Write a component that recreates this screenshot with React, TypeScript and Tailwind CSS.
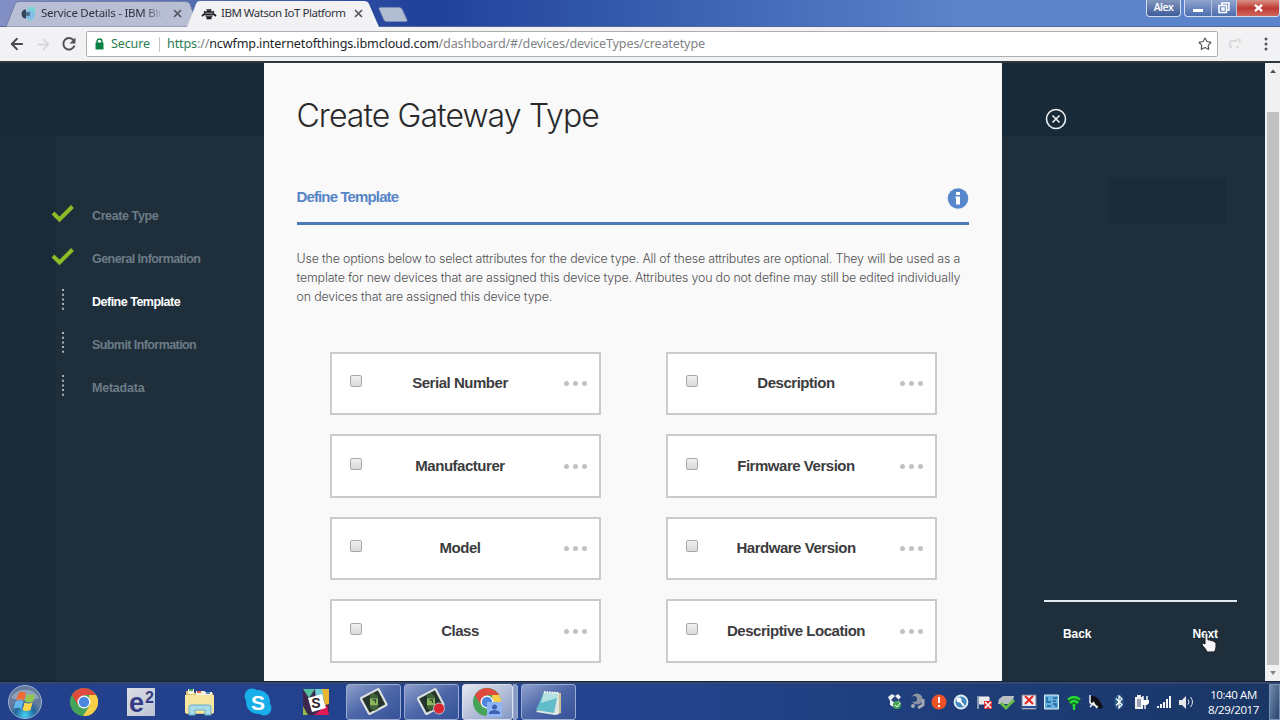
import React from 'react';
import { ArrowLeft, ArrowRight, RotateCw, Star } from 'lucide-react';

const STEPS = [
  { label: 'Create Type', state: 'done', tracking: 'tracking-[-0.4px]' },
  { label: 'General Information', state: 'done', tracking: 'tracking-[-0.55px]' },
  { label: 'Define Template', state: 'current', tracking: 'tracking-[-0.5px]' },
  { label: 'Submit Information', state: 'todo', tracking: 'tracking-[-0.58px]' },
  { label: 'Metadata', state: 'todo', tracking: 'tracking-[-0.22px]' },
];

const ATTRIBUTES = [
  'Serial Number',
  'Description',
  'Manufacturer',
  'Firmware Version',
  'Model',
  'Hardware Version',
  'Class',
  'Descriptive Location',
];

const TAB_FONT = "font-['Noto_Sans','Open_Sans',sans-serif]";

const CloseGlyph: React.FC = () => (
  <svg width="9" height="9" viewBox="0 0 9 9" className="shrink-0" stroke="#55585f" strokeWidth="1.7">
    <path d="M1 1l7 7M8 1l-7 7" />
  </svg>
);

const TabStrip: React.FC = () => (
  <div className="relative h-[27px] border-b border-[#4c6699] bg-linear-to-r from-[#8390c5] from-0% via-[#20409a] via-33% to-[#5b84ca] to-75%">
    <svg className="absolute top-0 left-0" width="420" height="27" viewBox="0 0 420 27">
      <path d="M6 27L15 4Q16 1.500 19 1.500H185Q189 1.500 190 4L198 27Z" fill="#b8bfd5" stroke="#7480a5" />
      <path d="M187 27L196 4Q197 1 200 1H364Q368 1 369 4L379 27Z" fill="#f2f2f4" />
      <path d="M379 8.500Q379 7.500 381 7.500H399Q401 7.500 402 9L407 20Q407.500 21.500 405.500 21.500H387Q385 21.500 384 20Z" fill="#b1bed1" stroke="#8190ba" strokeWidth=".7" />
      <path d="M28 7h7v7q0 7-7 7" fill="#78d4d4" />
      <circle cx="30" cy="15" r="4.500" fill="#83bce9" />
      <path d="M26 9.500a4.500 4.500 0 000 9z" fill="#30445a" />
      <circle cx="28" cy="14" r="2.300" fill="#4a7288" />
      <g stroke="#17191c" strokeWidth="1.700" fill="none">
        <path d="M202 16l3-2.500M216 16l-3-2.500M204 11.500l3 1.500M214 11.500l-3 1.500M206.500 10h5M206.500 18.500h5" />
        <ellipse cx="209" cy="14.500" rx="3" ry="2.800" fill="#222" />
      </g>
      <path d="M205.500 13.200h7M205.500 15.800h7" stroke="#eee" strokeWidth=".7" />
    </svg>
    <div className={`absolute inset-0 flex items-center text-[11.5px] text-[#30333c] ${TAB_FONT}`}>
      <span className="ml-[41px] w-[122px] whitespace-nowrap tracking-[-0.25px] mask-r-from-85%">
        Service Details - IBM Blu
      </span>
      <span className="ml-[10px]"><CloseGlyph /></span>
      <span className="ml-[39px] w-[126px] whitespace-nowrap tracking-[-0.48px]">IBM Watson IoT Platform</span>
      <span className="ml-[7px]"><CloseGlyph /></span>
    </div>
    <div className="absolute top-0 right-0 flex h-[17px] items-start text-white">
      <div className="mr-[3px] flex h-[17px] w-[35px] items-center justify-center rounded-b border border-t-0 border-[#d4def1] bg-linear-to-b from-[#8296bd] to-[#3e5c9b] font-['Open_Sans',sans-serif] text-[10.5px] font-semibold tracking-[-0.5px]">
        Alex
      </div>
      <div className="flex h-[17px] w-[96px] overflow-hidden rounded-b border border-t-0 border-[#d4def1] bg-linear-to-b from-[#91a5ce] via-[#6e88bd] to-[#4d6fae]">
        <div className="flex w-[27px] items-end justify-center border-r border-[#b6c5df] pb-[4px]">
          <div className="h-[3px] w-[10px] bg-white" />
        </div>
        <div className="flex w-[25px] items-center justify-center border-r border-[#b6c5df]">
          <svg width="12" height="12" viewBox="0 0 12 12" fill="none" stroke="#fff" strokeWidth="1.500">
            <path d="M4 3V1h7v7H9M1 3.500h7.500v7H1zM4 6h2v2H4z" />
          </svg>
        </div>
        <div className="flex flex-1 items-center justify-center bg-linear-to-b from-[#d79085] via-[#bd3832] to-[#ce665c]">
          <svg width="9" height="8" viewBox="0 0 10 9" stroke="#fff" strokeWidth="2.600"><path d="M1 1l8 7M9 1L1 8" /></svg>
        </div>
      </div>
    </div>
  </div>
);

const AddressBar: React.FC = () => (
  <div className="flex h-[36px] items-center border-b-2 border-[#30383e] bg-[#f2f1f3]">
    <ArrowLeft size={18} strokeWidth={2.4} className="ml-[8px] text-[#494b50]" />
    <ArrowRight size={17} className="ml-[9px] text-[#d2d2d5]" />
    {/* reload */}
    <svg width="16" height="16" viewBox="0 0 16 16" className="ml-[9px]" fill="none" stroke="#505257" strokeWidth="2">
      <path d="M12.500 4.200A5.700 5.700 0 1013.500 9.500" />
      <path d="M14.500 1.500v6h-6z" fill="#505257" stroke="none" />
    </svg>
    <div className={`ml-[9px] flex h-[26px] w-[1132px] items-center rounded-[2px] border border-[#afafb2] bg-white text-[13px] ${TAB_FONT}`}>
      <svg width="9" height="12" viewBox="0 0 9 12" className="ml-[8px]">
        <path d="M2 5V3.500a2.500 2.500 0 015 0V5" fill="none" stroke="#0b8043" strokeWidth="1.400" />
        <rect x=".5" y="4.500" width="8" height="7" rx=".5" fill="#0b8043" />
      </svg>
      <span className="ml-[7px] w-[41px] text-[12.5px] tracking-[-0.1px] text-[#277d51]">Secure</span>
      <span className="mx-[7px] h-[15px] w-px bg-[#c5c5c5]" />
      <span className="flex-1 text-[12.6px] tracking-[-0.15px] whitespace-nowrap text-[#808386]">
        <span className="text-[#277d51]">https</span>://<span className="text-[#22252a]">ncwfmp.internetofthings.ibmcloud.com</span>/dashboard/#/devices/deviceTypes/createtype
      </span>
      <Star size={14} strokeWidth={2} className="mr-[5px] text-[#55585d]" />
    </div>
    <svg width="14" height="12" viewBox="0 0 14 12" className="ml-[10px]" fill="none" stroke="#dcdadc" strokeWidth="2">
      <path d="M2 8V5q0-2 2-2h5M1 9h3M8 9h3" />
      <path d="M8 0l5 1-1 5z" fill="#dcdadc" stroke="none" />
    </svg>
    <svg width="4" height="14" viewBox="0 0 4 14" className="ml-[22px]" fill="#55575b">
      <circle cx="2" cy="2" r="1.500" /><circle cx="2" cy="7" r="1.500" /><circle cx="2" cy="12" r="1.500" />
    </svg>
  </div>
);

const StepMarker: React.FC<{ state: string }> = ({ state }) =>
  state === 'done' ? (
    <svg width="24" height="20" viewBox="0 0 24 20" className="mb-[5px]" fill="none" stroke="#8cbc26" strokeWidth="4">
      <path d="M2 9L8.500 15.500 21.500 2.500" />
    </svg>
  ) : (
    <svg width="24" height="22" viewBox="0 0 24 22" className="mb-[5px]" stroke="#a8b2ba" strokeWidth="2">
      <path d="M12 0v22" strokeDasharray="2 2.700" />
    </svg>
  );

const Sidebar: React.FC = () => (
  <aside className="relative w-[264px] shrink-0 bg-[#1e2e3a]">
    {/* dimmed dashboard behind the wizard */}
    <div className="absolute inset-x-0 top-0 h-[73px] bg-[#182a37]" />
    <div className="absolute top-[73px] bottom-0 left-0 w-[56px] bg-[#192b38]" />
    <ol className="relative pt-[132px]">
      {STEPS.map((step) => (
        <li key={step.label} className="flex h-[43px] items-center">
          <span className="ml-[51px] flex h-[28px] w-[41px] items-center"><StepMarker state={step.state} /></span>
          <span
            className={`text-[12.5px] font-bold whitespace-nowrap ${step.tracking} ${step.state === 'current' ? 'text-white' : 'text-[#6d7c86]'}`}
          >
            {step.label}
          </span>
        </li>
      ))}
    </ol>
  </aside>
);

const AttributeCard: React.FC<{ label: string }> = ({ label }) => (
  <label className="flex h-[63.5px] items-center border-2 border-[#cbcbcb] bg-white">
    <span className="mb-[4px] ml-[18px] size-[12px] rounded-[2px] border border-[#a9a9a9] bg-linear-to-b from-[#f0f0f0] to-[#dadada]" />
    <span className="w-[197px] text-center text-[15px] font-bold tracking-[-0.47px] text-[#3c3c3e]">{label}</span>
    <span className="mt-[1px] ml-[5px] flex gap-[4px]">
      <i className="size-[5px] rounded-full bg-[#c2c2c2]" />
      <i className="size-[5px] rounded-full bg-[#c2c2c2]" />
      <i className="size-[5px] rounded-full bg-[#c2c2c2]" />
    </span>
  </label>
);

const Wizard: React.FC = () => (
  <main className="w-[738px] shrink-0 bg-[#f9f9f9] pr-[33px] pl-[32.5px]">
    <h1 className="pt-[32px] font-['Inter',sans-serif] text-[32px] leading-[42px] font-light tracking-[-0.93px] whitespace-nowrap text-[#29292b]">
      Create Gateway Type
    </h1>
    <div className="mt-[44px] flex h-[44px] items-start justify-between border-b-3 border-[#4b7bb4]">
      <h2 className="pt-[6px] text-[15px] leading-[20px] font-bold tracking-[-0.87px] text-[#5685c6]">Define Template</h2>
      <svg width="22" height="22" viewBox="0 0 22 22" className="mt-[7px]">
        <circle cx="11" cy="10.500" r="10.300" fill="#5687cb" />
        <path d="M9 4h4v3H9zM8.500 8.500H13v8H9v-6h-.5z" fill="#fff" />
      </svg>
    </div>
    <p className="mt-[24px] font-['Inter',sans-serif] text-[12.4px] leading-[19px] font-light tracking-[-0.16px] whitespace-nowrap text-[#505053]">
      Use the options below to select attributes for the device type. All of these attributes are optional. They will be used as a<br />
      template for new devices that are assigned this device type. Attributes you do not define may still be edited individually<br />
      on devices that are assigned this device type.
    </p>
    <div className="mt-[45.5px] grid grid-cols-[271px_271px] gap-x-[65px] gap-y-[19px] pl-[33px]">
      {ATTRIBUTES.map((label) => (
        <AttributeCard key={label} label={label} />
      ))}
    </div>
  </main>
);

const HandCursor: React.FC = () => (
  <svg width="16" height="21" viewBox="0 0 16 21" className="absolute top-[569px] left-[199px]" fill="#f7f7fa" stroke="#15191e">
    <path d="M4 12V2.500Q4 1 5.500 1T7 2.500V8q2-.8 3 .7 2-.7 3 1 2 0 2 2V15q0 3-2 5H6Q5 17 1 13q0-3 3-1z" />
  </svg>
);

const ActionRail: React.FC = () => (
  <aside className="relative flex w-[263px] shrink-0 flex-col bg-[#1e2e3b]">
    <div className="absolute inset-x-0 top-0 h-[73px] bg-[#182a37]" />
    <div className="absolute top-[114px] left-[106px] h-[47px] w-[118px] bg-[#1a2b38]" />
    <button className="relative mt-[45px] ml-[42.5px] size-[22px]">
      <svg width="22" height="22" viewBox="0 0 22 22" fill="none" stroke="#eaf0f4" strokeWidth="1.600">
        <circle cx="11" cy="11" r="9.500" />
        <path d="M7.500 7.500l7 7m0-7l-7 7" />
      </svg>
    </button>
    <div className="mt-auto mr-[28px] mb-[38px] ml-[42px] flex justify-between border-t-2 border-[#e1e9f0] px-[19px] pt-[23px] text-[12px] leading-[18px] font-bold tracking-[-0.1px] text-white">
      <button>Back</button>
      <button>Next</button>
    </div>
    <HandCursor />
  </aside>
);

const Scrollbar: React.FC = () => (
  <div className="flex flex-1 flex-col items-center bg-[#f1f1f2]">
    <svg width="8" height="49" viewBox="0 0 8 49"><path d="M1 10l3-3.500L7 10z" fill="#505050" /></svg>
    <div className="w-[12px] flex-1 bg-[#c1c1c2]" />
    <svg width="8" height="16" viewBox="0 0 8 16"><path d="M1 6h6L4 10z" fill="#838383" /></svg>
  </div>
);

const ChromeLogo: React.FC = () => (
  <>
    <circle cx="14" cy="14" r="14" fill="#46a45a" />
    <path d="M1.900 7A14 14 0 0126.100 7H14l-6 10z" fill="#df493e" />
    <path d="M26.100 7A14 14 0 0113 28l7-11-1-10z" fill="#f7cf48" />
    <circle cx="14" cy="14" r="6.500" fill="#fff" />
    <circle cx="14" cy="14" r="5.200" fill="#4d86df" />
  </>
);

const CamtasiaLogo: React.FC = () => (
  <g transform="rotate(-28 14 14)">
    <rect x="4" y="4.500" width="20" height="18" rx="1" fill="#26352c" stroke="#dce1df" strokeWidth="2.200" />
    <g transform="rotate(28 14 14)">
      <path d="M10 6l4-1 4 3v3h-8zM10 18h8v3l-4 2-4-3z" fill="#3f6139" />
      <path d="M10 10.500h8v7h-8z" fill="#8ab85c" />
      <path d="M12.500 12h3v3" fill="none" stroke="#344b35" strokeWidth="1.300" />
    </g>
  </g>
);

const WINDOW_BUTTON = 'flex h-[36px] w-[55px] items-center justify-center rounded-[3px] border border-[#9aabd1] bg-linear-to-br from-[#8fa0cb] via-[#4c66a8] to-[#365399]';

const Launchers: React.FC = () => (
  <div className="flex items-center">
    <svg width="36" height="36" viewBox="0 0 36 36" className="ml-[7px]">
      <defs>
        <radialGradient id="orb" cy=".9"><stop stopColor="#45d4f4" /><stop offset=".6" stopColor="#24679f" /><stop offset="1" stopColor="#657b9d" /></radialGradient>
      </defs>
      <circle cx="18" cy="18" r="16.500" fill="url(#orb)" stroke="#9cb1cd" />
      <path d="M4 14a15 13 0 0128 0q-14 5-28 0" fill="#c6d4e3" opacity=".45" />
      <path d="M11.500 9q4-2.500 7.500 0l-2 7.500q-4-2.500-8 0z" fill="#ed6b35" />
      <path d="M20 10q4 2 8 0l-2 7.500q-4 2-8 0z" fill="#91c84d" />
      <path d="M8.500 17.500q4-2.500 8 0l-2 7.500q-4-2.500-8 0z" fill="#62b6ed" />
      <path d="M17.500 18.500q4 2 8 0l-2 7.500q-4 2-8 0z" fill="#ffd74f" />
    </svg>
    <svg width="28" height="28" viewBox="0 0 28 28" className="ml-[27px]"><ChromeLogo /></svg>
    <div className="relative ml-[29px] h-[28px] w-[28px] bg-linear-to-br from-[#dcdfe6] to-[#bcc3d3] font-['Liberation_Sans',sans-serif] font-bold text-[#363b85]">
      <span className="absolute top-[2px] left-[2px] text-[27px] leading-[27px]">e</span>
      <span className="absolute top-[1px] right-[1px] text-[16px] leading-[17px]">2</span>
    </div>
    <svg width="32" height="28" viewBox="0 0 32 28" className="ml-[29px]">
      <path d="M2 3h7l2 2h18v21H2z" fill="#d9bf70" />
      <path d="M4 1h6v5H4zM12 3h9v4h-9zM21 4h7v4h-7z" fill="#f3f2df" />
      <path d="M5 1h4v2H5z" fill="#43a557" /><path d="M13 3h4v2h-4z" fill="#d96242" /><path d="M22 4h4v2h-4z" fill="#518ac6" />
      <path d="M1 7h29v18H1z" fill="#f6e6a2" />
      <path d="M5 27V19q0-2 2-2h18q2 0 2 2v8h-6v-5h-10v5z" fill="#a9dae7" stroke="#6bacc8" />
    </svg>
    <svg width="28" height="28" viewBox="0 0 28 28" className="ml-[28px] font-['Liberation_Sans',sans-serif] font-bold">
      <circle cx="14" cy="14" r="12" fill="#18aee9" /><circle cx="8" cy="8" r="7.500" fill="#18aee9" /><circle cx="20" cy="20" r="7.500" fill="#18aee9" />
      <text x="14" y="21.500" textAnchor="middle" fontSize="21" fill="#fff">S</text>
    </svg>
    <svg width="28" height="28" viewBox="0 0 28 28" className="ml-[30px] font-['Liberation_Sans',sans-serif] font-bold">
      <path d="M1 1h26v26H1z" fill="#3c284c" />
      <path d="M1 1h12L7 10z" fill="#54bda2" /><path d="M13 1h14v8L14 13z" fill="#70cbd2" /><path d="M20 1h7v15l-4 1z" fill="#e9b52e" />
      <path d="M1 18l5 9H1z" fill="#94b747" /><path d="M12 27l13-10 2 10z" fill="#df1856" />
      <path d="M6 10l14-4 4 14-14 4z" fill="#fff" />
      <text x="14" y="20" textAnchor="middle" fontSize="14" fill="#2c2530">S</text>
    </svg>
    <div className={`ml-[16px] ${WINDOW_BUTTON}`}><svg width="28" height="28" viewBox="0 0 28 28"><CamtasiaLogo /></svg></div>
    <div className={`ml-[3px] ${WINDOW_BUTTON}`}>
      <svg width="29" height="28" viewBox="0 0 29 28"><CamtasiaLogo /><circle cx="22" cy="20.500" r="5.500" fill="#da2633" stroke="#bac0ca" /></svg>
    </div>
    <div className="ml-[3px] flex h-[36px] w-[51px] items-center justify-center rounded-[3px] border border-[#d9dfec] bg-linear-to-br from-[#e5e8f0] via-[#b6c0da] to-[#8497c2]">
      <svg width="29" height="29" viewBox="0 0 29 29"><ChromeLogo /><path d="M14 14h15v15H14z" fill="#91b4f5" /><circle cx="21.500" cy="19" r="2.500" fill="#3d62b4" /><path d="M16 26v-1q0-2 5.500-3 5.500 1 5.500 3v1z" fill="#3d62b4" /></svg>
    </div>
    <div className="h-[36px] w-[5px] rounded-r-[3px] border border-[#9aabd1] bg-[#8698c3]" />
    <div className={`ml-[3px] ${WINDOW_BUTTON}`}>
      <svg width="29" height="27" viewBox="0 0 29 27"><path d="M20 3l7 1v20l-6 2z" fill="#c9bd98" /><path d="M19 3l6 1v21l-4 1-19-3z" fill="#dfe5e2" /><path d="M10 3l14 1-4 20L2 21z" fill="#63bcc9" /><path d="M10 3l14 1-1 5L7 14z" fill="#b4e2e3" /><path d="M10 3l14 1" stroke="#f3f7f7" strokeWidth="2" strokeDasharray="1.500 1" /></svg>
    </div>
  </div>
);

const TrayIcons: React.FC = () => (
  <svg width="312" height="20" viewBox="0 0 312 20">
    <path d="M1 5l4-3 3 2 3-2 3 3-3 3 3 3-4 3-2 2-5-3V9z" fill="#eceff3" />
    <path d="M8 4L4 8l4 3 4-3z" fill="#24437d" /><circle cx="10" cy="13" r="4" fill="#43a657" /><path d="M8 13l2 2 3-4" stroke="#fff" fill="none" />
    <circle cx="30" cy="7" r="5.500" fill="#8c93a2" /><circle cx="27" cy="7" r="3" fill="#23427b" /><path d="M36 7v6l-5 3" stroke="#a5a9b1" strokeWidth="3" fill="none" /><circle cx="26" cy="14" r="2" fill="#a5a9b1" />
    <circle cx="52" cy="10" r="7.500" fill="#ed5327" /><path d="M52 5v6M52 13v2" stroke="#fff" strokeWidth="2" />
    <circle cx="74" cy="10" r="6.500" fill="#458ac0" stroke="#e0edf2" strokeWidth="1.800" /><circle cx="72" cy="8" r="2.500" fill="#fff" /><path d="M73 9l4 5" stroke="#fff" strokeWidth="2" />
    <path d="M91 4v13M92 5h10v7H92" stroke="#f3f3f3" fill="#e8e8e8" /><path d="M97 9h8v8h-8z" fill="#d53133" /><path d="M98 10l6 6m0-6l-6 6" stroke="#fff" strokeWidth="1.500" />
    <path d="M112 7l4-3h11l-2 8h-14z" fill="#b9bec3" /><path d="M114 11l5 5 8-8" stroke="#65bb47" strokeWidth="3" fill="none" />
    <path d="M135 3h14v14h-14z" fill="#ececf0" stroke="#777b8f" /><path d="M138 4l8 8m0-8l-8 8" stroke="#e32523" strokeWidth="2" /><path d="M135 15h14" stroke="#254f98" strokeWidth="2" />
    <path d="M157.500 3h14v14h-14z" fill="#65b4de" stroke="#e0edf4" /><path d="M160 5v5h4m2-4h4M166 9h3M160 14h4m2-2h3v3" stroke="#245c9d" fill="none" strokeWidth="1.400" />
    <path d="M180 7q7-6 14 0l-7 10z" fill="#116e2c" />
    <path d="M181 7.500q6-5 12 0M183 11q4-4 8 0M187 12v6" stroke="#28db35" strokeWidth="2.200" fill="none" />
    <path d="M204 4q8-1 12 12-4 2-12-4z" fill="#0d0f13" /><path d="M203 3v8M203 11l8 4M207 10l-4 5M206 10l4 6" stroke="#ececec" strokeWidth="1.500" fill="none" />
    <ellipse cx="232" cy="10" rx="5" ry="7.500" fill="#295886" /><path d="M229 6.500l6 6-3 3.500V4l3 3-6 6.500" stroke="#fff" fill="none" strokeWidth="1.200" />
    <path d="M248 5h8v12h-8zM250 3h4v2h-4z" fill="#f0f0f1" /><path d="M250 7h4v8h-4z" fill="#9aa3b5" /><path d="M254 8h8v3l-2 2h-4l-2-2z" fill="#fff" /><path d="M256 4v4m4-4v4m-2 4v5" stroke="#fff" strokeWidth="1.400" fill="none" />
    <path d="M270 14h2v2h-2zM273 12h2v4h-2zM276 10h2v6h-2zM279 7h2v9h-2zM282 4h2v12h-2z" fill="#f3f4f6" />
    <path d="M292 8h3l4-4v13l-4-4h-3z" fill="#e7e8ea" /><path d="M301 7.500q2 2.500 0 5M303.500 5q4 5 0 10" stroke="#e7e8ea" fill="none" />
  </svg>
);

const Taskbar: React.FC = () => (
  <footer className="flex h-[38px] items-center justify-between border-t-2 border-[#34476c] bg-linear-to-r from-[#23408c] via-[#24448f] to-[#193664]">
    <Launchers />
    <div className="flex items-center">
      <TrayIcons />
      <div className="ml-[2px] w-[65px] text-center font-['Open_Sans',sans-serif] text-[11.5px] leading-[15.5px] tracking-[-0.4px] whitespace-nowrap text-white">
        <div>10:40 AM</div>
        <div>8/29/2017</div>
      </div>
      <div className="ml-[3px] h-[36px] w-[11px] border border-[#7992b5] bg-linear-to-br from-[#758ead] to-[#28456e]" />
    </div>
  </footer>
);

export default function App() {
  return (
    <div className="flex h-[720px] w-[1280px] flex-col overflow-hidden font-['Liberation_Sans',Arial,sans-serif]">
      <TabStrip />
      <AddressBar />
      <div className="flex h-[619px] shrink-0 overflow-hidden border-b border-[#17243a]">
        <Sidebar />
        <Wizard />
        <ActionRail />
        <Scrollbar />
      </div>
      <Taskbar />
    </div>
  );
}
